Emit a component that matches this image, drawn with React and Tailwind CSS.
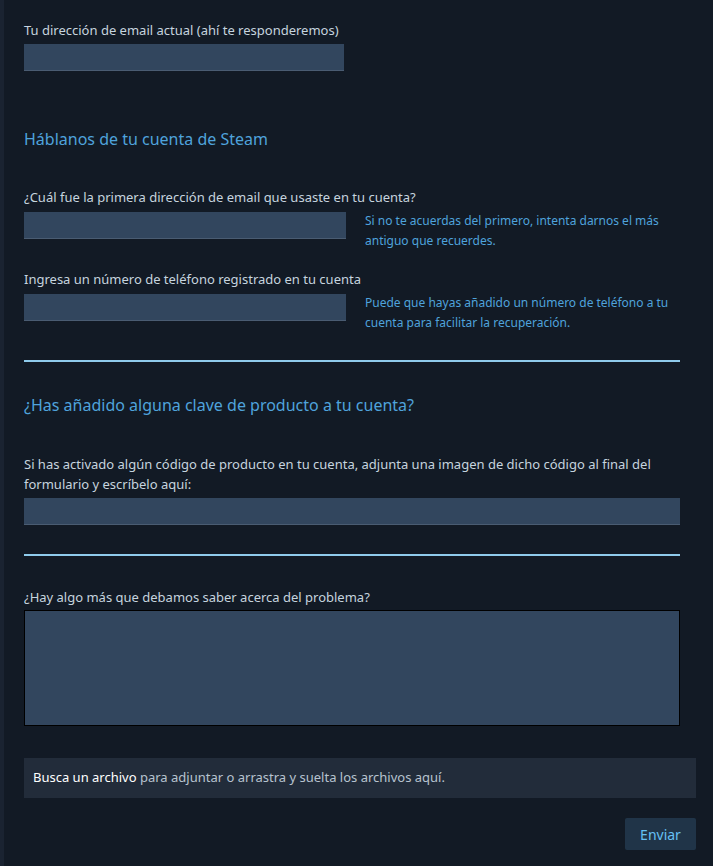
import React from "react";

const font = { fontFamily: '"Noto Sans", Arial, sans-serif' };

function Label({ children, className = "" }) {
  return (
    <div className={"text-[13px] leading-[20px] text-[#c6d4df] " + className}>{children}</div>
  );
}

function Input({ className = "" }) {
  return (
    <div className={"h-[27px] bg-[#32465e] border-b border-[#4a5c72] " + className} />
  );
}

export default function App() {
  return (
    <div className="min-h-[866px] w-[713px] bg-[#121a25] border-l-[4px] border-[#1a2331]" style={font}>
      <div className="pl-[20px] pr-[17px] pt-[20px] pb-[16px]">
        <Label className="mb-[4px]">Tu dirección de email actual (ahí te responderemos)</Label>
        <Input className="w-[320px]" />

        <h2 className="mt-[54px] text-[16px] leading-[28px] text-[#4fa3dc]">Háblanos de tu cuenta de Steam</h2>

        <div className="mt-[34px]">
          <Label className="mb-[5px]">¿Cuál fue la primera dirección de email que usaste en tu cuenta?</Label>
          <div className="flex gap-[19px]">
            <Input className="w-[322px] shrink-0" />
            <div className="text-[12px] leading-[20px] text-[#4fa3dc] w-[310px] -mt-[1px]">
              Si no te acuerdas del primero, intenta darnos el más antiguo que recuerdes.
            </div>
          </div>
        </div>

        <div className="mt-[18px]">
          <Label className="mb-[5px]">Ingresa un número de teléfono registrado en tu cuenta</Label>
          <div className="flex gap-[19px]">
            <Input className="w-[322px] shrink-0" />
            <div className="text-[12px] leading-[20px] text-[#4fa3dc] w-[320px] -mt-[1px]">
              Puede que hayas añadido un número de teléfono a tu cuenta para facilitar la recuperación.
            </div>
          </div>
        </div>

        <div className="mt-[27px] w-[656px] h-[2px] bg-[#8fcbec]" />

        <h2 className="mt-[29px] text-[16px] leading-[28px] text-[#4fa3dc]">¿Has añadido alguna clave de producto a tu cuenta?</h2>

        <Label className="mt-[35px] mb-[4px] w-[656px]">
          Si has activado algún código de producto en tu cuenta, adjunta una imagen de dicho código al final del formulario y escríbelo aquí:
        </Label>
        <Input className="w-[656px]" />

        <div className="mt-[29px] w-[656px] h-[2px] bg-[#8fcbec]" />

        <Label className="mt-[31px] mb-[3px]">¿Hay algo más que debamos saber acerca del problema?</Label>
        <div className="w-[656px] h-[116px] bg-[#32465e] border border-black" />

        <div className="mt-[32px] h-[40px] bg-[#222c3a] flex items-center px-[9px] text-[13px] text-[#b7c3cf]">
          <span className="text-white">Busca un archivo</span>&nbsp;para adjuntar o arrastra y suelta los archivos aquí.
        </div>

        <div className="mt-[20px] flex justify-end">
          <button className="w-[71px] h-[32px] rounded-[2px] bg-[#203448] text-[14px] text-[#66c0f4]">Enviar</button>
        </div>
      </div>
    </div>
  );
}
